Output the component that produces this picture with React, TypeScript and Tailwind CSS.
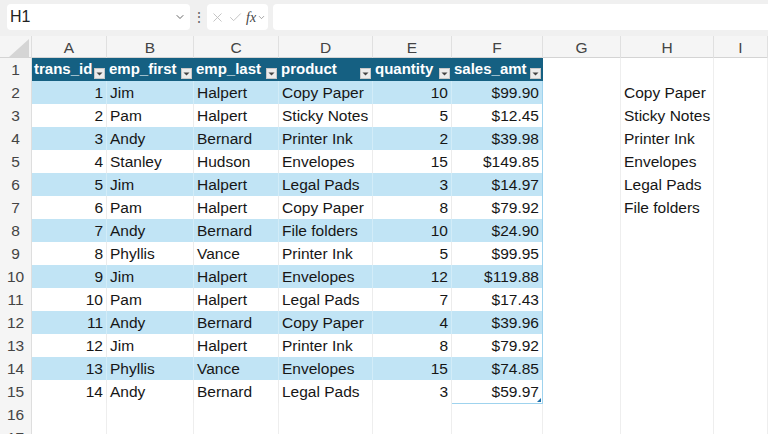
import { ChevronDown, X, Check } from 'lucide-react';

type Sale = {
  id: number;
  first: string;
  last: string;
  product: string;
  qty: number;
  amt: string;
};

const sales: Sale[] = [
  { id: 1, first: 'Jim', last: 'Halpert', product: 'Copy Paper', qty: 10, amt: '$99.90' },
  { id: 2, first: 'Pam', last: 'Halpert', product: 'Sticky Notes', qty: 5, amt: '$12.45' },
  { id: 3, first: 'Andy', last: 'Bernard', product: 'Printer Ink', qty: 2, amt: '$39.98' },
  { id: 4, first: 'Stanley', last: 'Hudson', product: 'Envelopes', qty: 15, amt: '$149.85' },
  { id: 5, first: 'Jim', last: 'Halpert', product: 'Legal Pads', qty: 3, amt: '$14.97' },
  { id: 6, first: 'Pam', last: 'Halpert', product: 'Copy Paper', qty: 8, amt: '$79.92' },
  { id: 7, first: 'Andy', last: 'Bernard', product: 'File folders', qty: 10, amt: '$24.90' },
  { id: 8, first: 'Phyllis', last: 'Vance', product: 'Printer Ink', qty: 5, amt: '$99.95' },
  { id: 9, first: 'Jim', last: 'Halpert', product: 'Envelopes', qty: 12, amt: '$119.88' },
  { id: 10, first: 'Pam', last: 'Halpert', product: 'Legal Pads', qty: 7, amt: '$17.43' },
  { id: 11, first: 'Andy', last: 'Bernard', product: 'Copy Paper', qty: 4, amt: '$39.96' },
  { id: 12, first: 'Jim', last: 'Halpert', product: 'Printer Ink', qty: 8, amt: '$79.92' },
  { id: 13, first: 'Phyllis', last: 'Vance', product: 'Envelopes', qty: 15, amt: '$74.85' },
  { id: 14, first: 'Andy', last: 'Bernard', product: 'Legal Pads', qty: 3, amt: '$59.97' },
];

const productList = ['Copy Paper', 'Sticky Notes', 'Printer Ink', 'Envelopes', 'Legal Pads', 'File folders'];

const columns = ['A', 'B', 'C', 'D', 'E', 'F', 'G', 'H', 'I'];
const headers = ['trans_id', 'emp_first', 'emp_last', 'product', 'quantity', 'sales_amt'];

const gridCols = 'grid grid-cols-[32px_75px_87px_85px_94px_79px_91px_78px_93px_1fr]';

function FilterButton() {
  return (
    <span className="flex h-[11px] w-[11px] shrink-0 items-center justify-center self-end mb-[2px] bg-[#ececec] border border-[#c8c8c8]">
      <svg width="7" height="4" viewBox="0 0 7 4">
        <path d="M0.5 0.5 L6.5 0.5 L3.5 3.5 Z" fill="#444" />
      </svg>
    </span>
  );
}

function RowNumber({ n }: { n: number }) {
  return (
    <div className="flex items-center justify-center bg-[#f5f5f5] border-r border-b border-[#dedede] text-[15.5px] text-[#444]">
      {n}
    </div>
  );
}

function EmptyCell({ text }: { text?: string }) {
  return (
    <div className="flex items-center px-[3px] bg-white border-r border-b border-[#eeeeee] whitespace-nowrap overflow-hidden">
      {text}
    </div>
  );
}

export default function App() {
  return (
    <div
      className="h-[434px] w-[768px] overflow-hidden bg-white text-[15.5px] text-[#161616]"
      style={{ fontFamily: '"Liberation Sans", Arial, sans-serif' }}
    >
      {/* formula bar */}
      <div className="flex h-[36px] items-center bg-[#f0f0f0] pl-[7px] pb-[2px]">
        <div className="flex h-[26px] w-[183px] items-center justify-between rounded-[4px] bg-white pl-[3px] pr-[4px]">
          <span className="text-[16px] text-[#222]">H1</span>
          <ChevronDown className="h-[12px] w-[12px] text-[#666]" strokeWidth={2} />
        </div>
        <span className="ml-[2px] w-[12px] text-center text-[14px] leading-none text-[#666]">⋮</span>
        <div className="ml-[3px] flex h-[26px] w-[61px] items-center rounded-[4px] bg-white pl-[3px]">
          <X className="h-[15px] w-[15px] text-[#bdbdbd]" strokeWidth={1.4} />
          <Check className="ml-[3px] h-[15px] w-[15px] text-[#bdbdbd]" strokeWidth={1.4} />
          <span
            className="ml-[3px] text-[14px] italic text-[#444]"
            style={{ fontFamily: '"Liberation Serif", serif' }}
          >
            fx
          </span>
          <ChevronDown className="ml-[1px] h-[9px] w-[9px] text-[#888]" strokeWidth={2} />
        </div>
        <div className="ml-[5px] h-[26px] flex-1 rounded-l-[4px] bg-white" />
      </div>

      {/* column letters */}
      <div className={`${gridCols} h-[22px] bg-[#f5f5f5] border-b border-[#d4d4d4]`}>
        <div className="relative border-r border-[#dedede]">
          <svg className="absolute right-[2px] bottom-[2px]" width="20" height="18" viewBox="0 0 20 18">
            <path d="M20 0 L20 18 L0 18 Z" fill="#d5d5d5" />
          </svg>
        </div>
        {columns.map((c) => (
          <div key={c} className="flex items-center justify-center border-r border-[#e0e0e0] text-[#444]">
            {c}
          </div>
        ))}
      </div>

      {/* row 1: table headers */}
      <div className={`${gridCols} h-[23px]`}>
        <RowNumber n={1} />
        {headers.map((h) => (
          <div
            key={h}
            className="flex items-center justify-between gap-[1px] bg-[#156082] border-b border-[#c1e4f5] pl-[2px] pr-[2px] text-[15px] font-bold text-white whitespace-nowrap overflow-hidden"
          >
            <span>{h}</span>
            <FilterButton />
          </div>
        ))}
        <EmptyCell />
        <EmptyCell />
        <EmptyCell />
      </div>

      {/* table rows */}
      {sales.map((s, i) => {
        const band = i % 2 === 0;
        const cell = `flex items-center px-[3px] border-b border-[#9fd3ee] whitespace-nowrap overflow-hidden ${
          band ? 'bg-[#c1e4f5] border-r border-r-[#d2ecf8]' : 'bg-white border-r border-r-[#ececec]'
        }`;
        return (
          <div key={s.id} className={`${gridCols} h-[23px]`}>
            <RowNumber n={i + 2} />
            <div className={`${cell} justify-end`}>{s.id}</div>
            <div className={cell}>{s.first}</div>
            <div className={cell}>{s.last}</div>
            <div className={cell}>{s.product}</div>
            <div className={`${cell} justify-end`}>{s.qty}</div>
            <div className={`relative ${cell} justify-end !border-r-[#9fd3ee]`}>
              {s.amt}
              {i === sales.length - 1 && (
                <svg className="absolute right-[1px] bottom-[1px]" width="4" height="4" viewBox="0 0 4 4">
                  <path d="M4 0 L4 4 L0 4 Z" fill="#1f6fa8" />
                </svg>
              )}
            </div>
            <EmptyCell />
            <EmptyCell text={productList[i]} />
            <EmptyCell />
          </div>
        );
      })}

      {/* empty rows */}
      {[16, 17].map((n) => (
        <div key={n} className={`${gridCols} h-[23px]`}>
          <RowNumber n={n} />
          {columns.map((c) => (
            <EmptyCell key={c} />
          ))}
        </div>
      ))}
    </div>
  );
}
